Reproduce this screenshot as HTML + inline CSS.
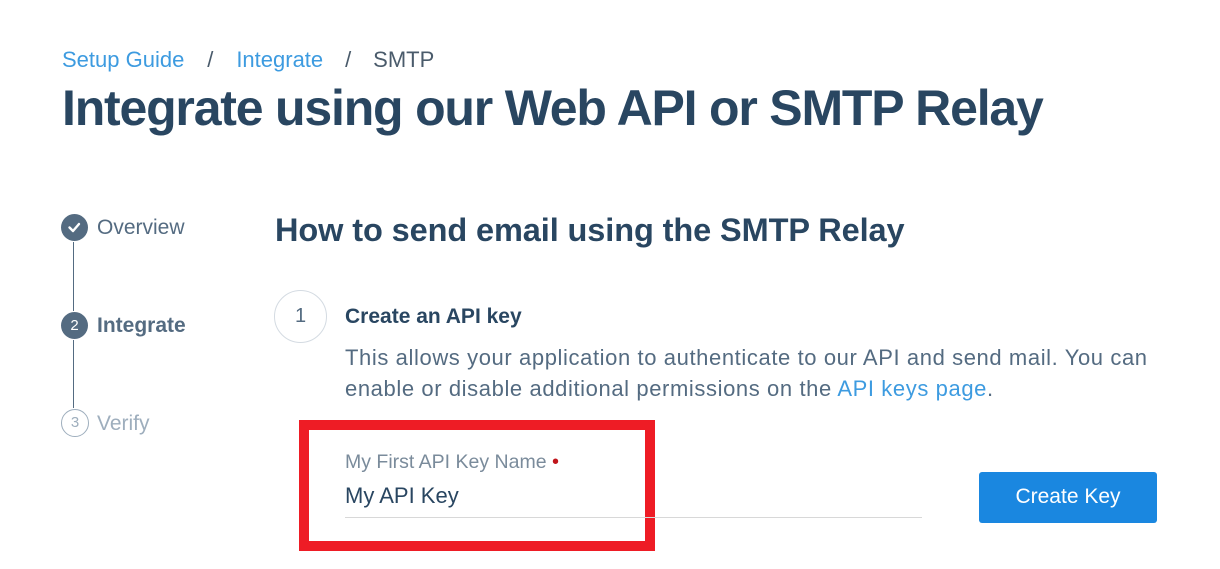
<!DOCTYPE html>
<html><head><style>
body{margin:0;width:1220px;height:569px;background:#fff;font-family:"Liberation Sans",sans-serif;position:relative;overflow:hidden;color:#294661}
.a{position:absolute;white-space:nowrap}
.bc{top:47px;left:62px;font-size:22px;color:#4a5b6b}
.bc span.l{color:#3d9be0}
h1{position:absolute;margin:0;top:79px;left:62px;font-size:50px;font-weight:bold;letter-spacing:-1.2px;color:#294661;white-space:nowrap}
h2{position:absolute;margin:0;top:212px;left:275px;font-size:32.5px;font-weight:bold;letter-spacing:-0.1px;color:#294661;white-space:nowrap}
.c{position:absolute;border-radius:50%;box-sizing:border-box;text-align:center}
.line{position:absolute;left:73px;width:1px;background:#546b81}
</style></head><body>
<div class="a bc"><span class="l">Setup Guide</span><span style="display:inline-block;width:52px;text-align:center">/</span><span class="l">Integrate</span><span style="display:inline-block;width:50px;text-align:center">/</span>SMTP</div>
<h1>Integrate using our Web API or SMTP Relay</h1>
<h2>How to send email using the SMTP Relay</h2>

<div class="c" style="left:61px;top:214px;width:27px;height:27px;background:#546b81"></div>
<svg class="a" style="left:61px;top:214px" width="27" height="27"><path d="M8.5 13.5l3.5 3.5 6-7" stroke="#fff" stroke-width="2.4" fill="none" stroke-linecap="round" stroke-linejoin="round"/></svg>
<div class="a" style="left:97px;top:216px;font-size:21px;color:#546b81">Overview</div>
<div class="line" style="top:242px;height:69px"></div>
<div class="c" style="left:61px;top:312px;width:27px;height:27px;background:#546b81;color:#fff;font-size:15px;line-height:27px">2</div>
<div class="a" style="left:97px;top:314px;font-size:21px;font-weight:bold;color:#546b81">Integrate</div>
<div class="line" style="top:340px;height:68px"></div>
<div class="c" style="left:61px;top:409px;width:28px;height:28px;border:1px solid #9eaebd;color:#9eaebd;font-size:15px;line-height:26px">3</div>
<div class="a" style="left:97px;top:412px;font-size:21px;color:#9eaebd">Verify</div>

<div class="c" style="left:274px;top:290px;width:53px;height:53px;border:1px solid #d4dbe2;color:#546b81;font-size:20px;line-height:50px">1</div>
<div class="a" style="left:345px;top:305px;font-size:21px;font-weight:bold">Create an API key</div>
<div class="a" style="left:345px;top:342px;font-size:22px;line-height:31px;letter-spacing:0.6px;color:#546b81">This allows your application to authenticate to our API and send mail. You can<br>enable or disable additional permissions on the <span style="color:#3d9be0">API keys page</span>.</div>

<div class="a" style="left:299px;top:420px;width:356px;height:131px;box-sizing:border-box;border:10px solid #ee1c25"></div>
<div class="a" style="left:345px;top:451px;font-size:19.5px;color:#7a8b9b">My First API Key Name <span style="color:#c0151b;font-size:20px">&#8226;</span></div>
<div class="a" style="left:345px;top:483px;font-size:22px;color:#294661">My API Key</div>
<div class="a" style="left:345px;top:517px;width:577px;height:1px;background:#d8d8d8"></div>
<div class="a" style="left:979px;top:472px;width:178px;height:51px;background:#1a87e0;border-radius:3px;color:#fff;font-size:21px;line-height:50px;text-align:center">Create Key</div>
</body></html>
